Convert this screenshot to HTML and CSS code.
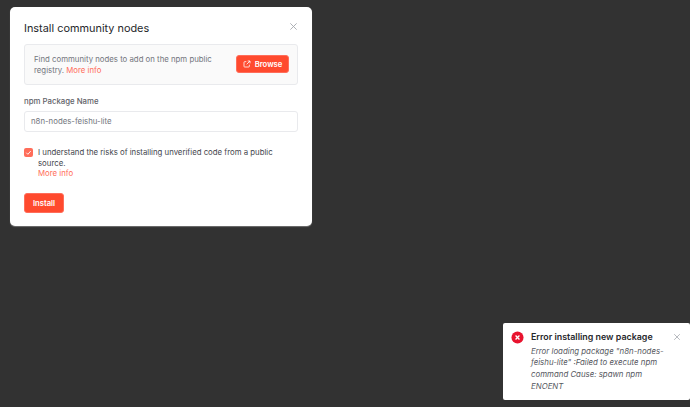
FILE: index.html
```
<!DOCTYPE html>
<html lang="en">
<head>
<meta charset="utf-8">
<title>Install community nodes</title>
<link rel="stylesheet" href="styles.css">
</head>
<body>
<div class="modal">
  <header class="modal-head">
    <h1 class="title">Install community nodes</h1>
    <svg class="close" viewBox="0 0 10 10"><path d="M1.5 1.5l7 7M8.5 1.5l-7 7"/></svg>
  </header>
  <div class="info">
    <p class="info-text">Find community nodes to add on the npm public registry. <a class="link">More info</a></p>
    <button class="btn browse">
      <svg class="ext" viewBox="0 0 12 12"><path d="M5 2.5H2.5a1 1 0 0 0-1 1v6a1 1 0 0 0 1 1h6a1 1 0 0 0 1-1V7M7 1.5h3.5V5M10.5 1.5L5.5 6.5"/></svg>
      Browse
    </button>
  </div>
  <label class="field-label">npm Package Name</label>
  <div class="input">n8n-nodes-feishu-lite</div>
  <div class="consent">
    <span class="check"><svg viewBox="0 0 10 10"><path d="M2.5 5.2l1.8 1.8 3.2-3.6"/></svg></span>
    <p class="consent-text">I understand the risks of installing unverified code from a public source.<br><a class="link">More info</a></p>
  </div>
  <button class="btn install">Install</button>
</div>
<div class="toast">
  <svg class="err" viewBox="0 0 14 14"><circle cx="7" cy="7" r="6.5"/><path d="M4.9 4.9l4.2 4.2M9.1 4.9l-4.2 4.2"/></svg>
  <div class="toast-body">
    <div class="toast-title">Error installing new package</div>
    <p class="toast-msg">Error loading package "n8n-nodes-feishu-lite" :Failed to execute npm command Cause: spawn npm ENOENT</p>
  </div>
  <svg class="close toast-close" viewBox="0 0 10 10"><path d="M1.5 1.5l7 7M8.5 1.5l-7 7"/></svg>
</div>
</body>
</html>
```
FILE: styles.css
```
* { box-sizing: border-box; }
html, body { height: 100%; }
body {
  margin: 0;
  background: #323232;
  font-family: Inter, "Liberation Sans", sans-serif;
  overflow: hidden;
  position: relative;
}
p { margin: 0; }
.modal {
  position: absolute;
  left: 10px;
  top: 7px;
  width: 302px;
  height: 219px;
  background: #fff;
  border-radius: 5px;
  padding: 14px 14px 0;
  box-shadow: 0 1px 1px rgba(255,255,255,.3);
}
.modal-head { display: flex; justify-content: space-between; align-items: flex-start; height: 23px; }
.title { margin: 0; font-size: 10.9px; line-height: 14px; font-weight: 400; color: #26272b; }
.close { width: 9px; height: 9px; fill: none; stroke: #a5a8ae; stroke-width: 1; margin-top: 1px; margin-right: 0; }
.info {
  display: flex;
  align-items: center;
  justify-content: space-between;
  height: 41px;
  padding: 0 8px 1px 9px;
  background: #fafafa;
  border: 1px solid #e9eaed;
  border-radius: 3px;
}
.info-text { width: 190px; margin-top: 1px; font-size: 7.8px; line-height: 11px; color: #74767e; }
.link { color: #ff6d5a; }
.btn {
  display: flex;
  align-items: center;
  justify-content: center;
  border: 1px solid #ff6d5a;
  background: #ff4a2e;
  color: #fff;
  font: 600 7.7px/11px Inter, "Liberation Sans", sans-serif;
  border-radius: 3px;
  padding: 0;
}
.browse { width: 53px; height: 18px; gap: 4px; }
.ext { width: 8px; height: 8px; fill: none; stroke: #fff; stroke-width: 1.2; }
.field-label { display: block; margin-top: 11px; font-size: 7.8px; line-height: 11px; font-weight: 500; color: #5f6168; }
.input {
  margin-top: 4px;
  height: 21px;
  padding: 0 6px;
  border: 1px solid #e9eaed;
  border-radius: 3px;
  font-size: 7.8px;
  line-height: 19px;
  color: #74767e;
}
.consent { display: flex; gap: 5px; margin-top: 16px; }
.check {
  flex: none;
  width: 9px;
  height: 9px;
  background: #ff6d5a;
  border-radius: 2px;
  display: flex;
}
.check svg { width: 9px; height: 9px; fill: none; stroke: #fff; stroke-width: 1; }
.consent-text { margin-top: -1px; font-size: 7.8px; line-height: 10.7px; color: #44464e; width: 240px; }
.install { width: 40px; height: 20px; margin-top: 14px; }
.toast {
  position: absolute;
  left: 503px;
  top: 323px;
  width: 187px;
  height: 77px;
  background: #fff;
  border-radius: 2px;
  padding: 8px 8px 0 8px;
  display: flex;
  align-items: flex-start;
}
.err { flex: none; width: 13px; height: 13px; margin-right: 7px; }
.err circle { fill: #e8132e; }
.err path { stroke: #fff; stroke-width: 1.4; fill: none; }
.toast-body { width: 139px; flex: none; }
.toast-title { font-size: 8.9px; line-height: 11px; font-weight: 600; color: #26272b; white-space: nowrap; }
.toast-msg { margin-top: 3.5px; font-size: 7.85px; line-height: 11.8px; font-style: italic; color: #55575e; }
.toast-close { margin-top: 2px; margin-left: 3px; width: 8px; height: 8px; }
```
